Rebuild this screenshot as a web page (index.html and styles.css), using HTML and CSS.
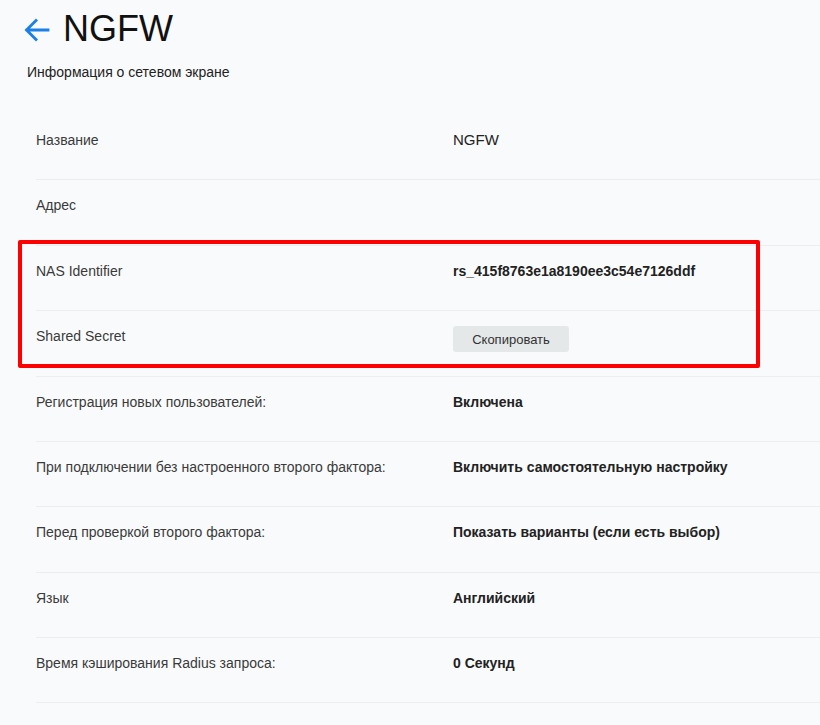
FILE: index.html
```html
<!DOCTYPE html>
<html lang="ru">
<head>
    <meta charset="UTF-8">
    <meta name="viewport" content="width=device-width, initial-scale=1.0">
    <title>NGFW</title>
    <link rel="stylesheet" href="styles.css">
</head>
<body>

    <div class="page">
        <div class="header">
            <a class="back" href="#">
                <svg width="26" height="24" viewBox="0 0 26 24">
                    <path d="M24 12H3M12 2.5L2.5 12l9.5 9.5" fill="none" stroke="#1a7fe6" stroke-width="2.8" stroke-linecap="square"/>
                </svg>
            </a>
            <h1>NGFW</h1>
        </div>
        <div class="subtitle">Информация о сетевом экране</div>

        <div class="info-list">
            <div class="row"><div class="label">Название</div><div class="value plain">NGFW</div></div>
            <div class="row"><div class="label">Адрес</div><div class="value"></div></div>
            <div class="row"><div class="label">NAS Identifier</div><div class="value">rs_415f8763e1a8190ee3c54e7126ddf</div></div>
            <div class="row"><div class="label">Shared Secret</div><div class="value"><button class="button">Скопировать</button></div></div>
            <div class="row"><div class="label">Регистрация новых пользователей:</div><div class="value">Включена</div></div>
            <div class="row"><div class="label">При подключении без настроенного второго фактора:</div><div class="value">Включить самостоятельную настройку</div></div>
            <div class="row"><div class="label">Перед проверкой второго фактора:</div><div class="value">Показать варианты (если есть выбор)</div></div>
            <div class="row"><div class="label">Язык</div><div class="value">Английский</div></div>
            <div class="row"><div class="label">Время кэширования Radius запроса:</div><div class="value">0 Секунд</div></div>
        </div>

        <div class="highlight"></div>
    </div>

</body>
</html>
```

FILE: styles.css
```css
body {
    font-family: "Liberation Sans", Arial, sans-serif;
    background-color: #f9fafc;
    margin: 0;
    padding: 0;
    color: #333;
}
.page {
    position: relative;
    padding: 7px 0 0 24px;
}
.header {
    display: flex;
    align-items: center;
    gap: 13px;
    height: 44px;
}
.back {
    display: flex;
    padding-top: 2px;
}
h1 {
    margin: 0;
    font-size: 36px;
    line-height: 44px;
    font-weight: normal;
    color: #111;
}
.subtitle {
    margin: 11px 0 0 3px;
    font-size: 14px;
    line-height: 20px;
    color: #222;
}
.info-list {
    margin: 33px 0 0 12px;
}
.row {
    display: flex;
    height: 65.375px;
    box-sizing: border-box;
    padding-top: 16px;
    border-bottom: 1px solid #eceef1;
    font-size: 14px;
    line-height: 18px;
}
.label {
    width: 417px;
    color: #3a3a3a;
}
.value {
    font-weight: bold;
    color: #222;
}
.value.plain {
    font-weight: normal;
    font-size: 15px;
}
.button {
    margin-top: -1px;
    width: 116px;
    height: 26px;
    background-color: #e4e8e9;
    color: #333;
    border: none;
    border-radius: 3px;
    font-family: inherit;
    font-size: 13px;
    cursor: pointer;
}
.highlight {
    position: absolute;
    left: 18px;
    top: 240px;
    width: 742px;
    height: 128px;
    box-sizing: border-box;
    border: 4.5px solid #ff0000;
    border-radius: 2px;
}
```
